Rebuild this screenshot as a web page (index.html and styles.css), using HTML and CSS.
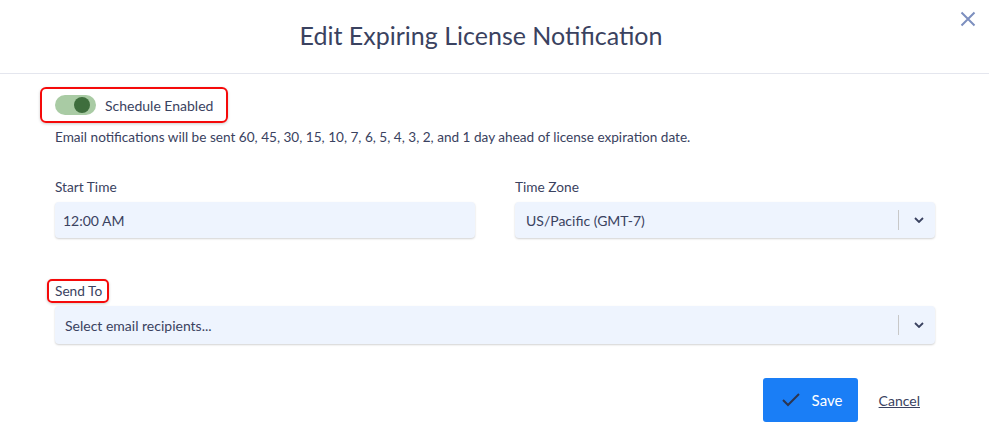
FILE: index.html
```html
<!DOCTYPE html>
<html lang="en">
<head>
    <meta charset="UTF-8">
    <title>Edit Expiring License Notification</title>
    <link rel="stylesheet" href="styles.css">
</head>
<body>
    <div class="modal">
        <div class="modal-header">
            <h2>Edit Expiring License Notification</h2>
            <button class="close" aria-label="Close">
                <svg width="16" height="16" viewBox="0 0 16 16"><path d="M1.5 1.5 L14.5 14.5 M14.5 1.5 L1.5 14.5" stroke="#7d8fbf" stroke-width="2" fill="none"/></svg>
            </button>
        </div>

        <div class="modal-body">
            <div class="toggle-row">
                <span class="toggle"><span class="knob"></span></span>
                <span class="toggle-label">Schedule Enabled</span>
            </div>
            <p class="note">Email notifications will be sent 60, 45, 30, 15, 10, 7, 6, 5, 4, 3, 2, and 1 day ahead of license expiration date.</p>

            <div class="fields">
                <div class="field">
                    <label>Start Time</label>
                    <div class="input">12:00 AM</div>
                </div>
                <div class="field">
                    <label>Time Zone</label>
                    <div class="input select">
                        <span>US/Pacific (GMT-7)</span>
                        <span class="sep"></span>
                        <svg class="caret" width="10" height="6" viewBox="0 0 10 6"><path d="M1 1 L5 5 L9 1" stroke="#3a4260" stroke-width="1.8" fill="none"/></svg>
                    </div>
                </div>
            </div>

            <div class="send-to">
                <label class="marked">Send To</label>
                <div class="input select">
                    <span>Select email recipients...</span>
                    <span class="sep"></span>
                    <svg class="caret" width="10" height="6" viewBox="0 0 10 6"><path d="M1 1 L5 5 L9 1" stroke="#3a4260" stroke-width="1.8" fill="none"/></svg>
                </div>
            </div>

            <div class="actions">
                <button class="save">
                    <svg width="18" height="14" viewBox="0 0 18 14"><path d="M1 7 L6 12 L17 1" stroke="#2c3550" stroke-width="2" fill="none"/></svg>
                    Save
                </button>
                <a href="#" class="cancel">Cancel</a>
            </div>
        </div>
    </div>
</body>
</html>
```

FILE: styles.css
```css
body {
    margin: 0;
    font-family: Lato, "Open Sans", sans-serif;
    color: #3a4260;
    background: #fff;
}
.modal {
    width: 989px;
}
.modal-header {
    position: relative;
    height: 73px;
    border-bottom: 1px solid #e4e6ee;
    display: flex;
    align-items: center;
    justify-content: center;
    padding-right: 27px;
}
.modal-header h2 {
    margin: 0;
    font-size: 25px;
    font-weight: 400;
    color: #3a4260;
    padding-bottom: 3px;
}
.close {
    position: absolute;
    top: 11px;
    right: 13px;
    background: none;
    border: none;
    padding: 0;
    cursor: pointer;
}
.modal-body {
    padding: 13px 54px 0 55px;
}
.toggle-row {
    display: inline-flex;
    align-items: center;
    gap: 9px;
    margin-left: -15px;
    padding: 6px 13px 6px 13px;
    border: 2px solid #f50a0a;
    border-radius: 6px;
    box-shadow: 0 1px 3px rgba(0,0,0,0.2);
    height: 20px;
}
.toggle {
    position: relative;
    width: 41px;
    height: 20px;
    border-radius: 10px;
    background: #a9cba4;
}
.knob {
    position: absolute;
    top: 2px;
    left: 19px;
    width: 16px;
    height: 16px;
    border-radius: 50%;
    background: #3e6e3d;
}
.toggle-label {
    font-size: 14px;
}
.note {
    margin: 5px 0 0;
    font-size: 13.6px;
    line-height: 18px;
}
.fields {
    display: grid;
    grid-template-columns: 420px 420px;
    column-gap: 40px;
    margin-top: 32px;
}
.field label,
.send-to label {
    display: block;
    font-size: 13.7px;
    margin-bottom: 7px;
}
.input {
    box-sizing: border-box;
    height: 36px;
    background: #eef4fe;
    border-radius: 4px;
    box-shadow: 0 1px 2px rgba(0,0,0,0.18);
    font-size: 14px;
    padding: 0 8px;
    display: flex;
    align-items: center;
}
.select {
    padding-right: 11px;
}
.select span:first-child {
    flex: 1;
    padding-left: 3px;
}
.sep {
    width: 1px;
    height: 20px;
    background: #c8c8c8;
    margin-right: 15px;
}
.send-to {
    margin-top: 41px;
}
.send-to .input {
    height: 38px;
    font-size: 14px;
}
.send-to .input span:first-child {
    padding-left: 2px;
}
.send-to label.marked {
    display: inline-block;
    margin-left: -8px;
    margin-bottom: 3px;
    padding: 1px 5px 2px 6px;
    border: 2px solid #f50a0a;
    border-radius: 5px;
    box-shadow: 0 1px 3px rgba(0,0,0,0.2);
}
.actions {
    display: flex;
    justify-content: flex-end;
    align-items: center;
    gap: 21px;
    margin-top: 34px;
    padding-right: 15px;
}
.save {
    display: flex;
    align-items: center;
    gap: 12px;
    width: 95px;
    height: 44px;
    padding: 0 0 0 19px;
    background: #1a7ef6;
    color: #fff;
    border: none;
    border-radius: 3px;
    font-family: Lato, sans-serif;
    font-size: 15px;
    cursor: pointer;
}
.cancel {
    color: #3a4260;
    font-size: 14px;
}
```
